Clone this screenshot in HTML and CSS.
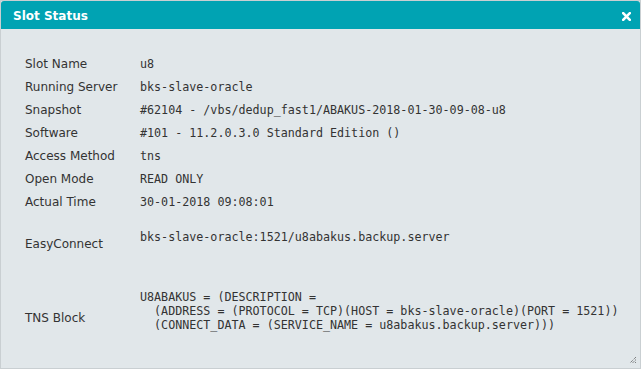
FILE: index.html
```html
<!DOCTYPE html>
<html lang="en">

<head>
    <meta charset="UTF-8">
    <meta name="viewport" content="width=device-width, initial-scale=1.0">
    <title>Slot Status</title>
    <link rel="stylesheet" href="styles.css">
</head>

<body>
    <div class="dialog">
        <div class="dialog-header">
            <span class="dialog-title">Slot Status</span>
            <button class="dialog-close" title="Close">
                <svg width="9" height="9" viewBox="0 0 9 9">
                    <path d="M1.2 1.2 L7.8 7.8 M7.8 1.2 L1.2 7.8" stroke="#fff" stroke-width="2.6" stroke-linecap="square" />
                </svg>
            </button>
        </div>

        <div class="dialog-body">
            <table class="status-table">
                <tr>
                    <td class="label">Slot Name</td>
                    <td class="value">u8</td>
                </tr>
                <tr>
                    <td class="label">Running Server</td>
                    <td class="value">bks-slave-oracle</td>
                </tr>
                <tr>
                    <td class="label">Snapshot</td>
                    <td class="value">#62104 - /vbs/dedup_fast1/ABAKUS-2018-01-30-09-08-u8</td>
                </tr>
                <tr>
                    <td class="label">Software</td>
                    <td class="value">#101 - 11.2.0.3.0 Standard Edition ()</td>
                </tr>
                <tr>
                    <td class="label">Access Method</td>
                    <td class="value">tns</td>
                </tr>
                <tr>
                    <td class="label">Open Mode</td>
                    <td class="value">READ ONLY</td>
                </tr>
                <tr>
                    <td class="label">Actual Time</td>
                    <td class="value">30-01-2018 09:08:01</td>
                </tr>
                <tr>
                    <td class="label">EasyConnect</td>
                    <td class="value"><pre>bks-slave-oracle:1521/u8abakus.backup.server</pre></td>
                </tr>
                <tr>
                    <td class="label">TNS Block</td>
                    <td class="value"><pre>U8ABAKUS = (DESCRIPTION =
  (ADDRESS = (PROTOCOL = TCP)(HOST = bks-slave-oracle)(PORT = 1521))
  (CONNECT_DATA = (SERVICE_NAME = u8abakus.backup.server)))</pre></td>
                </tr>
            </table>
        </div>

        <div class="resize-grip">
            <svg width="8" height="8" viewBox="0 0 8 8">
                <path d="M7 1 L1 7 M7 3.5 L3.5 7 M7 6 L6 7" stroke="#555" stroke-width="1" stroke-dasharray="1 1" />
            </svg>
        </div>
    </div>
</body>

</html>
```

FILE: styles.css
```css
/* Reset and base styles */
* {
    box-sizing: border-box;
    margin: 0;
    padding: 0;
}

body {
    font-family: "DejaVu Sans", Verdana, sans-serif;
    font-size: 12px;
    color: #333;
    background-color: #fff;
}

/* Dialog */
.dialog {
    position: relative;
    width: 641px;
    height: 369px;
    display: flex;
    flex-direction: column;
    border: 1px solid #c9cfd2;
    background-color: #e1e7ea;
}

/* Header */
.dialog-header {
    height: 28px;
    display: flex;
    align-items: center;
    justify-content: space-between;
    padding: 2px 9px 0 12px;
    background-color: #00a3b3;
    border-top-left-radius: 3px;
    border-top-right-radius: 3px;
}

.dialog-title {
    color: #fff;
    font-weight: bold;
    font-size: 12px;
}

.dialog-close {
    width: 9px;
    height: 9px;
    display: flex;
    background: none;
    border: none;
    cursor: pointer;
}

/* Body */
.dialog-body {
    flex: 1;
    padding: 24px 0 0 24px;
}

.status-table {
    border-collapse: collapse;
}

.status-table td {
    padding: 4px 0;
    line-height: 15px;
    vertical-align: middle;
}

.status-table .label {
    width: 115px;
}

.status-table .value {
    font-family: "DejaVu Sans Mono", monospace;
    font-size: 11.7px;
    color: #333;
}

/* Code blocks keep an empty line below the text */
.status-table pre {
    margin: 12px 0;
    padding-bottom: 14px;
    font-family: "DejaVu Sans Mono", monospace;
    font-size: 11.7px;
    line-height: 14px;
}

/* Resize grip */
.resize-grip {
    position: absolute;
    right: 3px;
    bottom: 4px;
    width: 8px;
    height: 8px;
    display: flex;
}
```
